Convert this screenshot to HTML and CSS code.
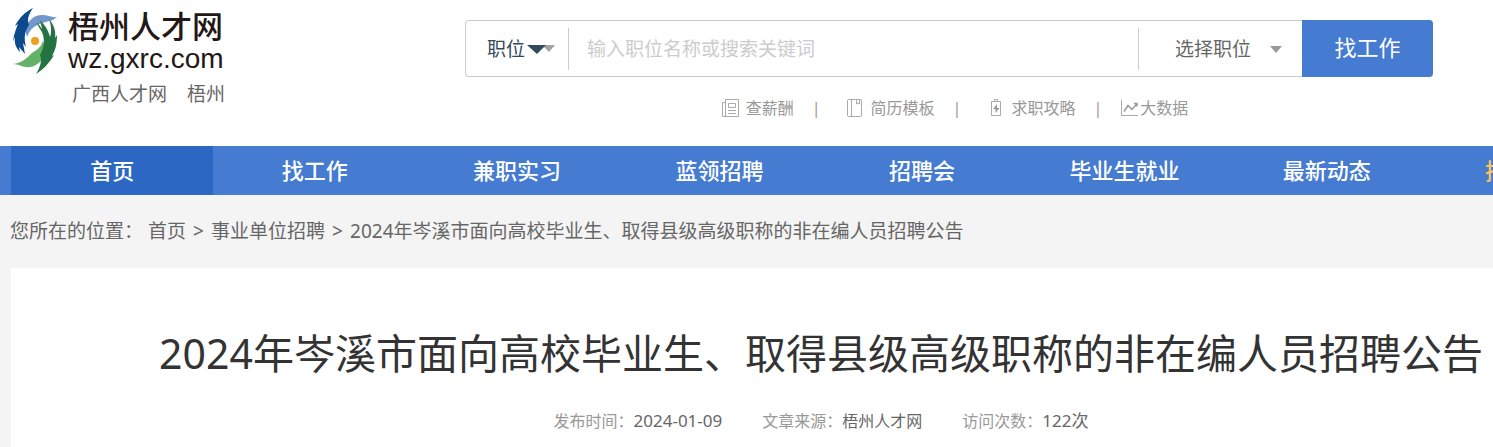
FILE: index.html
```html
<!DOCTYPE html>
<html lang="zh-CN">
<head>
<meta charset="utf-8">
<title>梧州人才网</title>
<link rel="stylesheet" href="styles.css">
</head>
<body>
<header class="header">
  <div class="brand">
    <a class="logo" href="#">
      <svg class="logo-mark" viewBox="0 0 46 66" aria-hidden="true">
        <path d="M13 22C15 13 22 7 30 7C36 7 40 10 45 9C41 13 36 13 31 15C23 17 18 21 15 29Z" fill="#7197cb"/>
        <path d="M1 56C10 55 15 50 20 45C25 42 29 39 31 33L34 43C31 52 26 58 18 59C11 60 7 56 1 56Z" fill="#63b267"/>
        <path d="M21 0C16 7 15 12 17 17C12 24 12 31 14 39L11 35L13 46L7 39L8 44C4 40 2 35 3 29L1 33C2 26 4 21 6 16L3 18C7 10 13 4 21 0Z" fill="#0b4a8c"/>
        <path d="M25 14L30 21L28 12L33 18C36 22 37 26 38 29C40 24 39 16 37 11C42 17 44 23 43 30L45 27C45 37 43 43 40 48L42 47C37 55 32 61 24 66C29 58 30 52 28 47C33 39 32 30 31 27C30 22 26 20 25 14Z" fill="#257342"/>
        <circle cx="23" cy="33" r="4" fill="#f0a01e"/>
      </svg>
      <span class="logo-text">
        <span class="logo-name">梧州人才网</span>
        <span class="logo-domain">wz.gxrc.com</span>
      </span>
    </a>
    <div class="sites"><a href="#">广西人才网</a><a href="#">梧州</a></div>
  </div>
  <div class="search-area">
    <form class="search">
      <div class="kind">
        <select class="kind-select" aria-label="搜索类型"><option>职位</option></select>
        <svg class="kind-arrows" viewBox="0 0 28 10" aria-hidden="true"><path d="M15 1h13l-6 7z" fill="#a3a3a3"/><path d="M0 1h19l-9 9z" fill="#34495e"/></svg>
      </div>
      <input class="keyword" type="text" placeholder="输入职位名称或搜索关键词" aria-label="关键词">
      <button class="category" type="button">选择职位<svg class="category-arrow" viewBox="0 0 12 8" aria-hidden="true"><path d="M0 1h12L6 8z" fill="#999"/></svg></button>
      <button class="submit" type="submit">找工作</button>
    </form>
    <div class="tools">
      <a href="#"><svg width="24" height="20" viewBox="0 0 24 20" aria-hidden="true"><path d="M3.500 1.500h13v17h-13zM3.500 4.500h-3v14h4M6.500 5.500h7v4h-7zM6 12.500h8M6 15.500h8"/></svg>查薪酬</a>
      <span>|</span>
      <a href="#"><svg width="32" height="20" viewBox="0 0 32 20" aria-hidden="true"><path d="M9.500 1.500h12a1 1 0 0 1 1 1v15a1 1 0 0 1-1 1h-12a1 1 0 0 1-1-1v-15a1 1 0 0 1 1-1zM12.500 2v16M17.500 2v4l1.500-1 1.500 1v-4"/></svg>简历模板</a>
      <span>|</span>
      <a href="#"><svg width="32" height="20" viewBox="0 0 32 20" aria-hidden="true"><path d="M12.500 3.500h9v14h-9zM15.500 3v-1.500h3v1.500"/><path d="M18 6l-4 5h2.500v4l4-5H18z" class="filled"/></svg>求职攻略</a>
      <span>|</span>
      <a href="#"><svg width="20" height="20" viewBox="0 0 20 20" aria-hidden="true"><path d="M1.500 2v15.500H18"/><path class="trend" d="M4 13.500l4-6 4 4 5-6M14 5.500h3v3"/></svg>大数据</a>
    </div>
  </div>
</header>
<nav class="nav">
  <a class="active" href="#">首页</a>
  <a href="#">找工作</a>
  <a href="#">兼职实习</a>
  <a href="#">蓝领招聘</a>
  <a href="#">招聘会</a>
  <a href="#">毕业生就业</a>
  <a href="#">最新动态</a>
  <a class="highlight" href="#">招聘公告</a>
</nav>
<div class="crumbs">
  <span>您所在的位置：</span>
  <a href="#">首页</a><span class="sep">&gt;</span><a href="#">事业单位招聘</a><span class="sep">&gt;</span><span>2024年岑溪市面向高校毕业生、取得县级高级职称的非在编人员招聘公告</span>
</div>
<main class="article">
  <h1 class="title">2024年岑溪市面向高校毕业生、取得县级高级职称的非在编人员招聘公告</h1>
  <div class="meta">
    <span>发布时间：<b class="latin">2024-01-09</b></span>
    <span>文章来源：<b>梧州人才网</b></span>
    <span>访问次数：<b class="latin">122次</b></span>
  </div>
</main>
</body>
</html>
```

FILE: styles.css
```css
* { box-sizing: border-box; }
body {
  margin: 0;
  background: #f4f4f4;
  color: #666;
  font: 19px/28px "Noto Sans", "Noto Sans CJK SC", sans-serif;
  overflow-x: hidden;
}
a { color: inherit; text-decoration: none; }
button, input, select { font: inherit; margin: 0; padding: 0; border: 0; background: none; }

.header {
  display: flex;
  min-height: 146px;
  padding: 8px 60px 0 12px;
  background: #fff;
}
.brand { flex: 0 0 453px; }
.logo { display: flex; gap: 10px; color: #231815; }
.logo-mark { width: 46px; height: 66px; }
.logo-text { display: flex; flex-direction: column; }
.logo-name { font-size: 31px; line-height: 36px; font-weight: 500; }
.logo-domain { font-family: "Liberation Sans", sans-serif; font-size: 28px; line-height: 30px; }
.sites { display: flex; gap: 20px; padding: 6px 0 0 60px; }

.search-area { flex: 1; min-width: 0; padding-top: 12px; }
.search {
  display: flex;
  align-items: center;
  height: 57px;
  border: 1px solid #ccc;
  border-right: 0;
  border-radius: 4px;
}
.kind {
  display: flex;
  align-items: center;
  height: 42px;
  width: 103px;
  padding-left: 21px;
  border-right: 1px solid #ccc;
}
.kind-select { appearance: none; width: 40px; height: 28px; color: #34495e; }
.kind-arrows { width: 28px; height: 10px; }
.keyword { flex: 1; min-width: 0; height: 42px; padding-left: 18px; outline: 0; color: #333; }
.keyword::placeholder { color: #ccc; opacity: 1; }
.category {
  display: flex;
  align-items: center;
  gap: 19px;
  width: 164px;
  height: 42px;
  padding-left: 36px;
  border-left: 1px solid #ccc;
  color: #666;
}
.category-arrow { width: 12px; height: 8px; }
.submit {
  width: 131px;
  height: 57px;
  padding-bottom: 4px;
  border-radius: 0 4px 4px 0;
  background: #457bd0;
  color: #fff;
  font-size: 22px;
}
.tools {
  display: flex;
  justify-content: center;
  gap: 18px;
  padding: 17px 0 0 12px;
  font-size: 16px;
  color: #999;
}
.tools a { display: flex; align-items: center; }
.tools svg { fill: none; stroke: #aaa; }
.tools .filled { fill: #999; stroke: none; }
.tools .trend { stroke: #999; stroke-width: 1.5; }

.nav { display: flex; padding-left: 11px; background: #457bd0; overflow: hidden; }
.nav a {
  flex: 0 0 13.66%;
  color: #fff;
  font-size: 22px;
  font-weight: 500;
  line-height: 49px;
  text-align: center;
  white-space: nowrap;
}
.nav .active { background: #2c67c4; }
.nav .highlight { color: #ffc35c; }

.crumbs { display: flex; padding: 22px 0 23px 10px; white-space: nowrap; }
.crumbs a:first-of-type { margin-left: 5px; }
.crumbs .sep { width: 25px; text-align: center; }

.article { margin-left: 11px; padding: 55px 0 12px; background: #fff; }
.title {
  margin: 0 0 0 138px;
  color: #333;
  font-size: 41px;
  font-weight: 400;
  line-height: 60px;
  text-align: center;
  white-space: nowrap;
}
.meta {
  display: flex;
  justify-content: center;
  gap: 40px;
  padding: 24px 0 0 138px;
  color: #999;
  font-size: 16px;
}
.meta b { color: #666; font-weight: 400; }
.meta .latin { font-size: 17px; }
```
